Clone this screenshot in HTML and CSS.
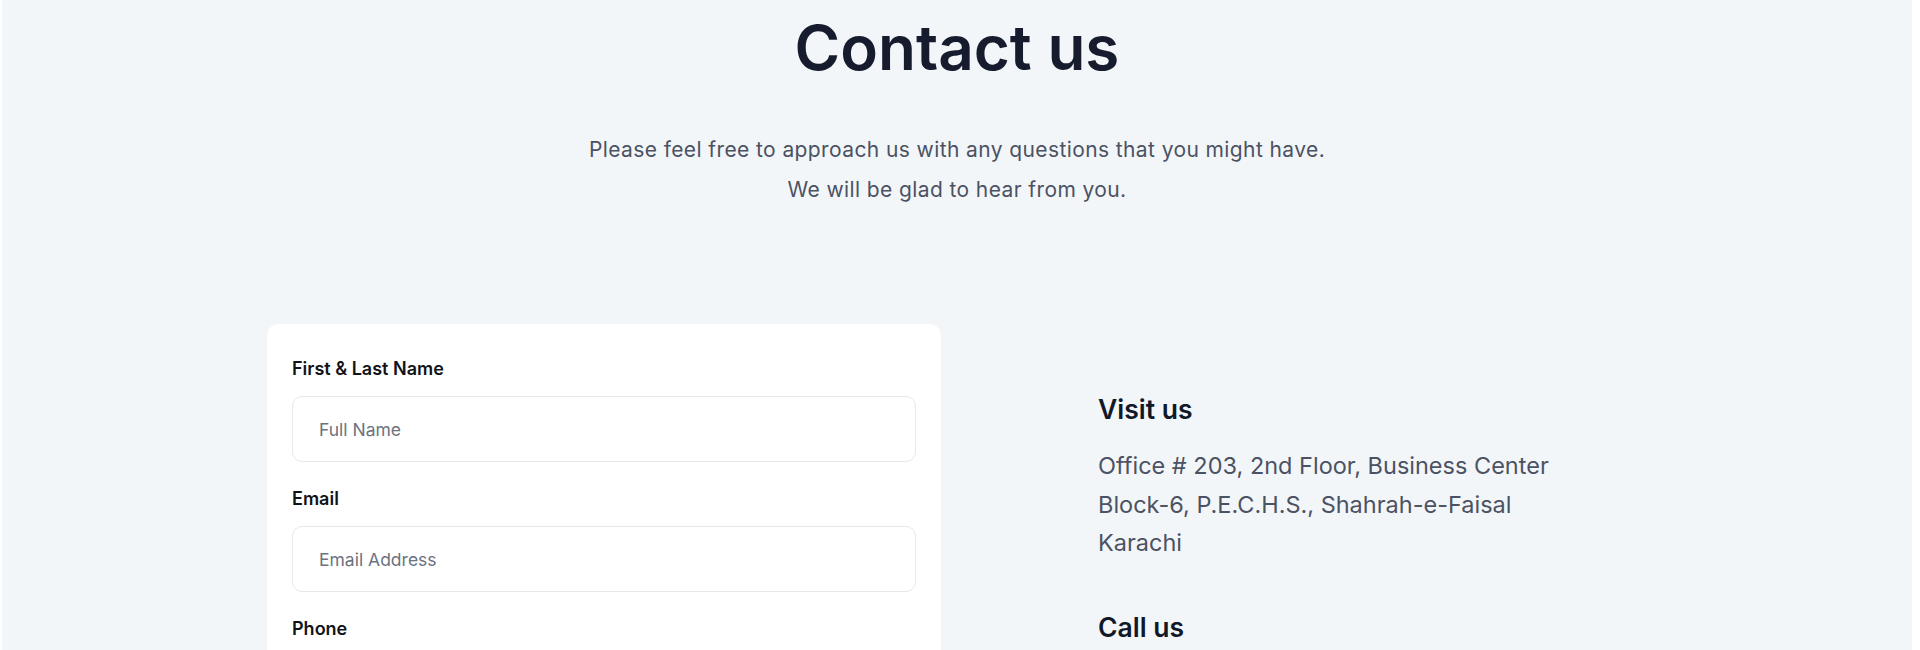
FILE: index.html
```html
<!DOCTYPE html>
<html lang="en">
<head>
  <meta charset="UTF-8" />
  <meta name="viewport" content="width=device-width, initial-scale=1.0">
  <title>Contact us</title>
  <link rel="stylesheet" href="styles.css">
</head>
<body>

  <section class="contact">
    <header class="contact-head">
      <h1>Contact us</h1>
      <p>Please feel free to approach us with any questions that you might have.<br>
        We will be glad to hear from you.</p>
    </header>

    <div class="contact-body">
      <form class="card" onsubmit="return false">
        <label for="name">First &amp; Last Name</label>
        <input type="text" id="name" placeholder="Full Name" />

        <label for="email">Email</label>
        <input type="email" id="email" placeholder="Email Address" />

        <label for="phone">Phone</label>
        <input type="tel" id="phone" placeholder="Phone Number" />

        <label for="message">Message</label>
        <textarea id="message" placeholder="Your message"></textarea>
      </form>

      <div class="info">
        <div class="info-block">
          <h3>Visit us</h3>
          <p>Office # 203, 2nd Floor, Business Center<br>
            Block-6, P.E.C.H.S., Shahrah-e-Faisal<br>
            Karachi</p>
        </div>
        <div class="info-block">
          <h3>Call us</h3>
          <p>+92 21 3455 1234</p>
        </div>
      </div>
    </div>
  </section>

</body>
</html>
```

FILE: styles.css
```css
body {
  margin: 0;
  background: #ffffff;
  font-family: Inter, "Noto Sans", sans-serif;
}

.contact {
  background: #f3f6f9;
  margin: 0 8px 0 2px;
  padding: 12px 0 80px;
  min-height: 100vh;
}

.contact-head {
  text-align: center;
}

.contact-head h1 {
  margin: 0;
  font-size: 62px;
  line-height: 72px;
  font-weight: 600;
  color: #161b2e;
}

.contact-head p {
  margin: 46px 0 0;
  font-size: 21px;
  line-height: 40px;
  letter-spacing: 0.4px;
  color: #4b5263;
}

.contact-body {
  display: grid;
  grid-template-columns: 674px 1fr;
  column-gap: 157px;
  margin: 114px 0 0 265px;
}

.card {
  background: #ffffff;
  border-radius: 12px;
  padding: 33px 25px 30px;
  display: flex;
  flex-direction: column;
}

.card label {
  font-size: 18px;
  line-height: 24px;
  font-weight: 600;
  color: #111318;
  margin-bottom: 15px;
}

.card input,
.card textarea {
  height: 66px;
  box-sizing: border-box;
  border: 1px solid #e6e8eb;
  border-radius: 10px;
  padding: 0 26px;
  font-family: inherit;
  font-size: 17.5px;
  color: #111318;
  background: #ffffff;
  margin-bottom: 25px;
  outline: none;
}

.card textarea {
  height: 150px;
  padding-top: 20px;
  resize: none;
}

.card input::placeholder,
.card textarea::placeholder {
  color: #6b7280;
}

.info {
  padding-top: 67px;
}

.info-block {
  margin-bottom: 46px;
}

.info h3 {
  margin: 0;
  font-size: 26.5px;
  line-height: 36px;
  font-weight: 600;
  color: #111827;
}

.info p {
  margin: 20px 0 0;
  font-size: 23.5px;
  line-height: 38.5px;
  color: #4b5263;
}
```
